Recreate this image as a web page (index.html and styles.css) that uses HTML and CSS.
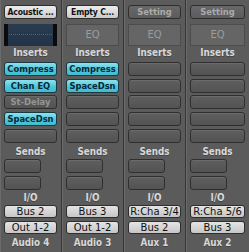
FILE: index.html
```html
<!DOCTYPE html>
<html lang="en">
<head>
    <meta charset="UTF-8">
    <title>Mixer Strips</title>
    <link rel="stylesheet" href="styles.css">
</head>
<body>
    <div class="mixer">
        <!-- Audio 4 -->
        <div class="strip">
            <div class="setting loaded">Acoustic ...</div>
            <div class="eq eq-on"><span class="eq-line"></span></div>
            <div class="label">Inserts</div>
            <div class="slots">
                <div class="slot plug">Compress</div>
                <div class="slot plug">Chan EQ</div>
                <div class="slot bypassed">St-Delay</div>
                <div class="slot plug">SpaceDsn</div>
                <div class="slot"></div>
            </div>
            <div class="label">Sends</div>
            <div class="sends">
                <div class="slot send"></div>
                <div class="slot send"></div>
            </div>
            <div class="label">I/O</div>
            <div class="io">Bus 2</div>
            <div class="io">Out 1-2</div>
            <div class="label name">Audio 4</div>
        </div>

        <!-- Audio 3 -->
        <div class="strip">
            <div class="setting loaded">Empty C...</div>
            <div class="eq">EQ</div>
            <div class="label">Inserts</div>
            <div class="slots">
                <div class="slot plug">Compress</div>
                <div class="slot plug">SpaceDsn</div>
                <div class="slot"></div>
                <div class="slot"></div>
                <div class="slot"></div>
            </div>
            <div class="label">Sends</div>
            <div class="sends">
                <div class="slot send"></div>
                <div class="slot send"></div>
            </div>
            <div class="label">I/O</div>
            <div class="io">Bus 3</div>
            <div class="io">Out 1-2</div>
            <div class="label name">Audio 3</div>
        </div>

        <!-- Aux 1 -->
        <div class="strip">
            <div class="setting">Setting</div>
            <div class="eq">EQ</div>
            <div class="label">Inserts</div>
            <div class="slots">
                <div class="slot"></div>
                <div class="slot"></div>
                <div class="slot"></div>
                <div class="slot"></div>
                <div class="slot"></div>
            </div>
            <div class="label">Sends</div>
            <div class="sends">
                <div class="slot send"></div>
                <div class="slot send"></div>
            </div>
            <div class="label">I/O</div>
            <div class="io">R:Cha 3/4</div>
            <div class="io">Bus 2</div>
            <div class="label name">Aux 1</div>
        </div>

        <!-- Aux 2 -->
        <div class="strip">
            <div class="setting">Setting</div>
            <div class="eq">EQ</div>
            <div class="label">Inserts</div>
            <div class="slots">
                <div class="slot"></div>
                <div class="slot"></div>
                <div class="slot"></div>
                <div class="slot"></div>
                <div class="slot"></div>
            </div>
            <div class="label">Sends</div>
            <div class="sends">
                <div class="slot send"></div>
                <div class="slot send"></div>
            </div>
            <div class="label">I/O</div>
            <div class="io">R:Cha 5/6</div>
            <div class="io">Bus 3</div>
            <div class="label name">Aux 2</div>
        </div>
    </div>
</body>
</html>
```

FILE: styles.css
```css
/* Channel strip mixer */
body {
    margin: 0;
    padding: 0;
    background-color: #5b5b5b;
    font-family: "DejaVu Sans Condensed", "DejaVu Sans", sans-serif;
    font-size: 9px;
}

.mixer {
    display: flex;
    width: 249px;
    height: 252px;
    background-color: #5b5b5b;
}

.strip {
    width: 62px;
    box-sizing: border-box;
    padding: 5px 4px 0 4px;
    border-right: 1px solid #363636;
    box-shadow: inset 1px 0 0 #6b6b6b;
    display: flex;
    flex-direction: column;
}

.strip:last-child {
    border-right: none;
    width: 63px;
}

/* top setting button */
.setting {
    height: 14px;
    box-sizing: border-box;
    border: 1px solid #2e2e2e;
    border-radius: 3px;
    background: linear-gradient(#686868, #5c5c5c);
    color: #aaaaaa;
    font-weight: bold;
    font-size: 9.3px;
    text-align: center;
    line-height: 12px;
    white-space: nowrap;
}

.setting.loaded {
    background: linear-gradient(#ededed, #cacaca);
    color: #111;
    font-size: 8.6px;
    letter-spacing: -0.2px;
}

/* EQ thumbnail */
.eq {
    margin-top: 5px;
    height: 22px;
    box-sizing: border-box;
    border: 1px solid #4c4c4c;
    background-color: #656565;
    color: #9c9c9c;
    font-family: "DejaVu Sans", sans-serif;
    font-size: 10px;
    text-align: center;
    line-height: 20px;
}

.eq-on {
    position: relative;
    border: none;
    border-left: 4px solid #0b0b0b;
    border-right: 4px solid #0b0b0b;
    background: linear-gradient(#2b3b50, #223247);
}

.eq-line {
    position: absolute;
    left: 1px;
    right: 1px;
    top: 10px;
    border-top: 1px dotted #4d6580;
}

/* section labels */
.label {
    height: 14px;
    line-height: 14px;
    color: #d8d8d8;
    font-weight: bold;
    font-size: 9.8px;
    text-align: center;
    text-shadow: 0 1px 0 #444;
}

.slots {
    margin-top: 2px;
    display: flex;
    flex-direction: column;
    gap: 2.7px;
}

.sends {
    display: flex;
    flex-direction: column;
    gap: 3px;
}

.slots + .label {
    margin-top: 2px;
}

.sends + .label {
    margin-top: 1px;
}

.slot {
    height: 14px;
    box-sizing: border-box;
    border: 1px solid #2f2f2f;
    border-radius: 3px;
    background: linear-gradient(#5f5f5f, #535353);
    box-shadow: inset 0 1px 0 #6b6b6b;
    text-align: center;
    line-height: 12px;
    font-weight: bold;
    font-size: 9.3px;
    white-space: nowrap;
}

.slot.plug {
    border-color: #183a44;
    background: linear-gradient(#8fe3ef, #4cc6d8 55%, #43bccf);
    box-shadow: none;
    color: #07283a;
}

.slot.bypassed {
    color: #969696;
}

.slot.send {
    width: 37px;
}

/* I/O buttons */
.io {
    height: 13px;
    box-sizing: border-box;
    border: 1px solid #2e2e2e;
    border-radius: 3px;
    background: linear-gradient(#e4e4e4, #c6c6c6);
    color: #111;
    text-align: center;
    line-height: 11px;
    font-family: "DejaVu Sans", sans-serif;
    font-size: 10px;
    white-space: nowrap;
}

.io + .io {
    margin-top: 3px;
}

.label.name {
    margin-top: 2px;
}
```
